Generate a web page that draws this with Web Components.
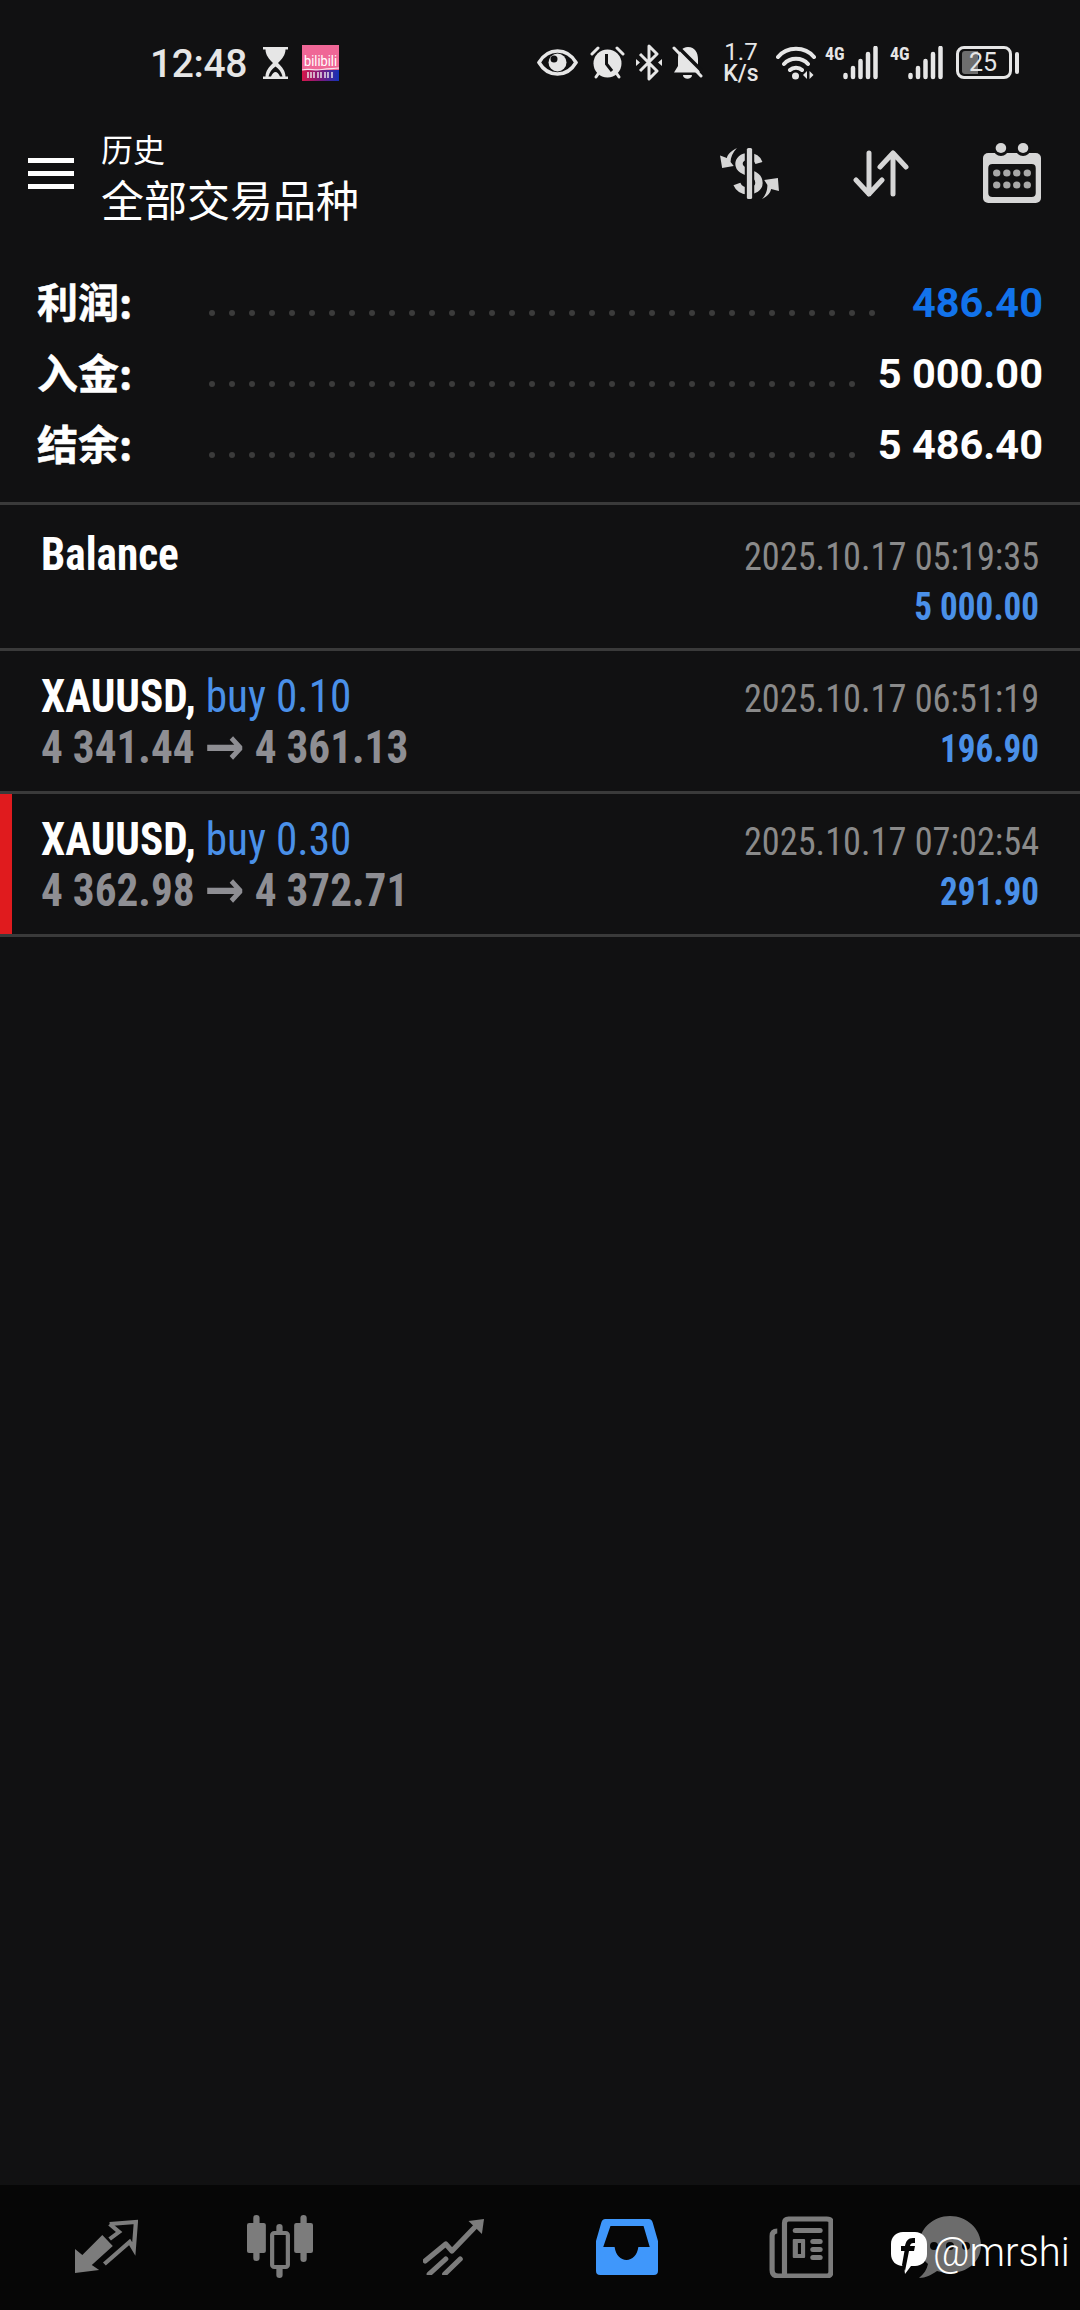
<!DOCTYPE html>
<html lang="zh">
<head>
<meta charset="utf-8">
<title>历史</title>
<style>
  html, body { margin: 0; padding: 0; background: #111112; }
  body { width: 1080px; height: 2310px; overflow: hidden; font-family: Roboto, "Noto Sans CJK SC", sans-serif; }
</style>
</head>
<body>
<history-screen>
  <status-bar></status-bar>
  <app-toolbar subtitle="历史" heading="全部交易品种"></app-toolbar>
  <summary-list>
    <summary-row dots="34">利润:<span slot="value" style="color:#1273eb">486.40</span></summary-row>
    <summary-row dots="33">入金:<span slot="value">5 000.00</span></summary-row>
    <summary-row dots="33">结余:<span slot="value">5 486.40</span></summary-row>
  </summary-list>
  <deal-row class="first" time="2025.10.17 05:19:35" amount="5 000.00" symbol="Balance"></deal-row>
  <deal-row time="2025.10.17 06:51:19" amount="196.90" symbol="XAUUSD," side="buy 0.10" from="4 341.44" to="4 361.13"></deal-row>
  <deal-row marked time="2025.10.17 07:02:54" amount="291.90" symbol="XAUUSD," side="buy 0.30" from="4 362.98" to="4 372.71"></deal-row>
  <bottom-nav></bottom-nav>
</history-screen>

<script>
// history-screen: page column, the nav is pushed to the bottom
class HistoryScreen extends HTMLElement {
  constructor() {
    super();
    this.attachShadow({ mode: 'open' });
    this.shadowRoot.innerHTML = `
      <style>
        :host { display: flex; flex-direction: column; width: 1080px; height: 2310px; background: #111112; color: #fff; }
        ::slotted(bottom-nav) { margin-top: auto; }
      </style>
      <slot></slot>`;
  }
}

const signalIcon = `<svg style="position:absolute;left:18px;top:0" width="35" height="34" viewBox="0 0 35 34"><path stroke="#e6e6e6" stroke-width="4.500" stroke-linecap="round" d="M2.500 31V29M10 31V22M17.500 31V15M25 31V8M32.500 31V2"/></svg>`;

class StatusBar extends HTMLElement {
  constructor() {
    super();
    this.attachShadow({ mode: 'open' });
    this.shadowRoot.innerHTML = `
      <style>
        :host { display: flex; align-items: center; height: 125px; padding: 0 61px 0 150px; box-sizing: border-box; color: #e6e6e6; font-family: Roboto, sans-serif; }
        svg { display: block; flex: none; }
        .time { font-size: 39px; font-weight: 500; line-height: 40px; width: 96px; margin-top: 2px; letter-spacing: -.4px; white-space: nowrap; }
        .glass { margin-left: 17px; }
        .bili { margin-left: 14px; }
        .icons { display: flex; align-items: center; margin-left: auto; }
        .speed { width: 36px; margin: 0 17px 0 20px; text-align: center; white-space: nowrap; }
        .speed .up { font-size: 24px; line-height: 21px; }
        .speed .unit { font-size: 23px; line-height: 21px; font-weight: 500; }
        .net { display: flex; align-items: flex-start; width: 53px; height: 34px; position: relative; }
        .net span { font-size: 18px; font-weight: 700; line-height: 15px; font-stretch: 75%; }
        .batt { display: flex; align-items: center; width: 63px; margin-left: 13px; }
        .cell { position: relative; width: 56px; height: 33px; box-sizing: border-box; border: 3px solid #e6e6e6; border-radius: 8px; font-size: 25px; line-height: 27px; padding-left: 10px; }
        .cell i { position: absolute; left: 3px; top: 2px; bottom: 2px; width: 16px; background: #6e6e6e; border-radius: 3px 0 0 3px; }
        .cell b { position: relative; font-weight: 400; }
        .nub { width: 4px; height: 22px; margin-left: 3px; background: #e6e6e6; border-radius: 2px; }
      </style>
      <div class="time">12:48</div>
      <svg class="glass" width="25" height="32" viewBox="0 0 25 32"><path fill="#e6e6e6" d="M0 0H25V2.500H22.500C22.500 8 19 12 15 16C19 20 22.500 24 22.500 29.500H25V32H0V29.500H2.500C2.500 24 6 20 10 16C6 12 2.500 8 2.500 2.500H0Z"/><path fill="#111112" d="M12.500 19.500C9 22 6.500 25 5.500 29.500H8C9 27 11 25 12.500 25C14 25 16 27 17 29.500H19.500C18.500 25 16 22 12.500 19.500Z"/></svg>
      <svg class="bili" width="37" height="36" viewBox="0 0 37 36"><defs><linearGradient id="bl" x1="0" x2="1" y1="0" y2="0"><stop offset="0" stop-color="#d6174a"/><stop offset=".5" stop-color="#7c1a7c"/><stop offset="1" stop-color="#1232b8"/></linearGradient></defs><rect width="37" height="25" fill="#ef6796"/><rect y="25" width="37" height="11" fill="url(#bl)"/><path fill="none" stroke="#f6e6ee" stroke-width="1.200" d="M0 25C8 23 12 26 20 24.500S30 24 37 23"/><text x="18.500" y="21" font-family="Roboto" font-size="15" font-weight="400" fill="#fff" text-anchor="middle" textLength="33" lengthAdjust="spacingAndGlyphs">bilibili</text><path stroke="#eee" stroke-width="1.400" d="M6 27V33M9 27V33M12 27V33M16 27V33M19 27V33M23 27V33M26 27V33M30 27V33"/></svg>
      <div class="icons">
        <svg width="41" height="27" viewBox="0 0 41 27"><path fill="none" stroke="#e6e6e6" stroke-width="3.500" d="M2 13.500C7 5 13 2 20.500 2S34 5 39 13.500C34 22 28 25 20.500 25S7 22 2 13.500Z"/><circle cx="20.500" cy="13.500" r="9" fill="#e6e6e6"/><circle cx="17" cy="10" r="3.500" fill="#111112"/></svg>
        <svg style="margin-left:12px" width="35" height="33" viewBox="0 0 35 33"><circle cx="17.500" cy="17.500" r="14" fill="#e6e6e6"/><path fill="none" stroke="#e6e6e6" stroke-width="3" stroke-linecap="round" d="M2 8L8 2M33 8L27 2M6 31L8 28M29 31L27 28"/><path fill="none" stroke="#111112" stroke-width="3" d="M16.500 8V18L22 25"/></svg>
        <svg style="margin-left:11px" width="26" height="37" viewBox="0 0 26 37"><path fill="none" stroke="#e6e6e6" stroke-width="3" stroke-linejoin="round" d="M4 10L21 27L13 35V2L21 10L4 27"/><path fill="#e6e6e6" d="M0 15L4 18.500L0 22ZM26 15L22 18.500L26 22Z"/></svg>
        <svg style="margin-left:10px" width="31" height="34" viewBox="0 0 31 34">
          <path fill="#e6e6e6" d="M16 1C23 1 26 7 26 13V21L28 26.500H2L6 20V12C6 6 10 1 16 1Z"/>
          <path fill="#e6e6e6" d="M11 29H20C20 34 11 34 11 29Z"/>
          <path stroke="#111112" stroke-width="3.500" d="M5 0L32 27"/>
          <path stroke="#e6e6e6" stroke-width="3" stroke-linecap="round" d="M2 2L29 30"/>
        </svg>
        <div class="speed"><div class="up">1.7</div><div class="unit">K/s</div></div>
        <svg width="40" height="35" viewBox="0 0 40 35"><path fill="none" stroke="#e6e6e6" stroke-width="4" stroke-linecap="round" d="M2 12C11 1 29 1 38 12M8 19C14 12 26 12 32 19M14 25C17 22 23 22 26 25"/><circle cx="19.500" cy="31" r="3.500" fill="#e6e6e6"/><path fill="#e6e6e6" d="M31 26V34L27 30ZM33.500 26V34L37.500 30Z"/></svg>
        <div class="net" style="margin-left:9px"><span>4G</span>${signalIcon}</div>
        <div class="net" style="margin-left:12px"><span>4G</span>${signalIcon}</div>
        <div class="batt"><div class="cell"><i></i><b>25</b></div><div class="nub"></div></div>
      </div>`;
  }
}

class AppToolbar extends HTMLElement {
  constructor() {
    super();
    this.attachShadow({ mode: 'open' });
    this.shadowRoot.innerHTML = `
      <style>
        :host { display: flex; align-items: center; height: 100px; padding: 0 39px 0 28px; box-sizing: border-box; color: #fff; font-family: "Noto Sans CJK SC", sans-serif; }
        .burger { display: flex; flex-direction: column; gap: 8px; width: 46px; margin: -3px 27px 0 0; }
        .burger i { display: block; height: 5px; background: #fff; }
        .titles { display: flex; flex-direction: column; gap: 5px; }
        .sub { font-size: 32px; line-height: 40px; }
        .main { font-size: 43px; line-height: 50px; white-space: nowrap; }
        .actions { display: flex; align-items: center; margin: -4px 0 0 auto; }
        svg { display: block; }
      </style>
      <div class="burger"><i></i><i></i><i></i></div>
      <div class="titles"><div class="sub" id="sub"></div><div class="main" id="main"></div></div>
      <div class="actions">
        <svg width="61" height="53" viewBox="0 0 58 53" preserveAspectRatio="none" fill="#d6d6d6">
          <path fill="none" stroke="#d6d6d6" stroke-width="7" d="M38 16C36 10 32 9.500 28 9.500C22 9.500 19 13 19 17C19 22 24 24 29 26C34 28 38 30 38 36C38 41 33 44 28 44C23 44 19 42 17 37"/>
          <rect x="24.500" y="0" width="9" height="53" fill="#111112"/>
          <rect x="26.500" y="1" width="5" height="51" rx="1.500"/>
          <path d="M17 1C11 4 8 8 7.500 11L1 8.500L3 21L14 19L11 15C11 10 13 6 17 1Z"/>
          <path d="M41 52C47 49 49 45 49.500 42L57 44L56 31L43 33L46 38C46 43 45 47 41 52Z"/>
        </svg>
        <svg style="margin-left:73px" width="56" height="47" viewBox="0 0 56 47" fill="none" stroke="#d6d6d6" stroke-width="5" stroke-linecap="round" stroke-linejoin="round">
          <path d="M16 3V44M3 30L16 44L29 30"/><path d="M40 44V3M27 17L40 3L53 17"/>
        </svg>
        <svg style="margin-left:74px" width="58" height="60" viewBox="0 0 55 60" preserveAspectRatio="none">
          <rect y="10" width="55" height="50" rx="5" fill="#d6d6d6"/>
          <rect x="5" y="21" width="45" height="33" rx="4" fill="#111112"/>
          <circle cx="17" cy="6" r="7" fill="#111112"/><circle cx="38" cy="6" r="7" fill="#111112"/>
          <circle cx="17" cy="5" r="5" fill="#d6d6d6"/><circle cx="38" cy="5" r="5" fill="#d6d6d6"/>
          <g fill="#a8a8a8"><circle cx="13" cy="30" r="3.500"/><circle cx="22.600" cy="30" r="3.500"/><circle cx="32" cy="30" r="3.500"/><circle cx="42" cy="30" r="3.500"/><circle cx="13" cy="42" r="3.500"/><circle cx="22.600" cy="42" r="3.500"/><circle cx="32" cy="42" r="3.500"/><circle cx="42" cy="42" r="3.500"/></g>
        </svg>
      </div>`;
  }

  connectedCallback() {
    this.shadowRoot.getElementById('sub').textContent = this.getAttribute('subtitle') || '';
    this.shadowRoot.getElementById('main').textContent = this.getAttribute('heading') || '';
  }
}

class SummaryList extends HTMLElement {
  constructor() {
    super();
    this.attachShadow({ mode: 'open' });
    this.shadowRoot.innerHTML = `
      <style>
        :host { display: block; padding: 42px 0 22px; border-bottom: 3px solid #3a3a3a; }
      </style>
      <slot></slot>`;
  }
}

class SummaryRow extends HTMLElement {
  constructor() {
    super();
    this.attachShadow({ mode: 'open' });
    this.shadowRoot.innerHTML = `
      <style>
        :host { display: flex; align-items: center; height: 71px; padding: 0 37px; color: #fff; }
        .label { width: 172px; flex: none; font: 700 41px/67px "Noto Sans CJK SC", sans-serif; padding-bottom: 4px; -webkit-text-stroke: .5px #fff; }
        .dots { display: flex; gap: 14px; margin-top: 20px; }
        .dots i { display: block; width: 6px; height: 6px; border-radius: 50%; background: #3b3b3b; }
        .value { margin-left: auto; font: 700 41.500px/71px Roboto, sans-serif; white-space: nowrap; }
      </style>
      <div class="label"><slot></slot></div>
      <div class="dots" id="dots"></div>
      <div class="value"><slot name="value"></slot></div>`;
  }

  connectedCallback() {
    const n = parseInt(this.getAttribute('dots') || '0', 10);
    this.shadowRoot.getElementById('dots').innerHTML = '<i></i>'.repeat(n);
  }
}

class DealRow extends HTMLElement {
  constructor() {
    super();
    this.attachShadow({ mode: 'open' });
    this.shadowRoot.innerHTML = `
      <style>
        :host { display: flex; height: 143px; box-sizing: border-box; border-bottom: 3px solid #3a3a3a; font-family: Roboto, sans-serif; }
        :host(.first) { height: 146px; padding-top: 4px; }
        .mark { width: 12px; flex: none; }
        :host([marked]) .mark { background: #e01b1e; }
        .body { flex: 1; display: flex; justify-content: space-between; padding: 18.500px 41px 0 29px; }
        /* the app squeezes its row text tighter than Roboto Condensed */
        .left { font-size: 47px; line-height: 51px; white-space: nowrap; font-weight: 700; font-stretch: 75%; transform: scaleX(.92); transform-origin: left top; }
        .sym { color: #fff; }
        .side { color: #4a90e8; font-weight: 400; }
        .prices { color: #8e8e93; }
        .arrow { font: 700 52px/51px "DejaVu Sans", sans-serif; vertical-align: -1px; }
        .right { text-align: right; font-size: 38px; line-height: 50px; white-space: nowrap; padding-top: 4.500px; font-stretch: 75%; }
        .time { color: #8a8a8a; transform: scaleX(.955); transform-origin: right top; }
        .amount { color: #4a90e8; font-weight: 700; transform: scaleX(.925); transform-origin: right top; }
      </style>
      <div class="mark"></div>
      <div class="body">
        <div class="left">
          <div><span class="sym" id="sym"></span> <span class="side" id="side"></span></div>
          <div class="prices" id="prices"></div>
        </div>
        <div class="right">
          <div class="time" id="time"></div>
          <div class="amount" id="amount"></div>
        </div>
      </div>`;
  }

  connectedCallback() {
    const root = this.shadowRoot;
    root.getElementById('sym').textContent = this.getAttribute('symbol') || '';
    root.getElementById('side').textContent = this.getAttribute('side') || '';
    if (this.hasAttribute('from')) {
      root.getElementById('prices').innerHTML =
        `${this.getAttribute('from')} <span class="arrow">→</span> ${this.getAttribute('to')}`;
    }
    root.getElementById('time').textContent = this.getAttribute('time') || '';
    root.getElementById('amount').textContent = this.getAttribute('amount') || '';
  }
}

class BottomNav extends HTMLElement {
  constructor() {
    super();
    this.attachShadow({ mode: 'open' });
    this.shadowRoot.innerHTML = `
      <style>
        :host { display: grid; position: relative; grid-template-columns: repeat(6, 173.500px); height: 125px; padding-left: 20px; background: #060606; align-items: center; justify-items: center; }
        svg { display: block; }
        .mark { position: absolute; left: 891px; top: 47px; display: flex; align-items: center; color: #fff; font: 300 40px/40px Roboto, sans-serif; }
        .mark svg { margin-right: 6px; }
      </style>
      <svg style="margin-top:-2px" width="63" height="55" viewBox="0 0 60 55" preserveAspectRatio="none" fill="#7c7c7c">
        <path d="M0 30L7 36L26 16L36 27L16 46L23 51L0 54Z"/>
        <path fill="none" stroke="#7c7c7c" stroke-width="4" d="M33 5L58 3L56 30L52 23L28 45M33 5L42 13L33 20"/>
      </svg>
      <svg style="margin-top:-2px" width="66" height="63" viewBox="0 0 63 63" preserveAspectRatio="none" fill="#7c7c7c">
        <rect x="6" y="0" width="6" height="46" rx="3"/><rect x="0" y="8" width="18" height="30" rx="2"/>
        <rect x="51" y="0" width="6" height="47" rx="3"/><rect x="45" y="8" width="18" height="30" rx="2"/>
        <rect x="28" y="9" width="6" height="54" rx="3"/><rect x="24" y="18" width="15" height="34" rx="2" fill="#060606" stroke="#7c7c7c" stroke-width="4"/>
      </svg>
      <svg style="margin-top:-2px" width="61" height="56" viewBox="0 0 59 56" preserveAspectRatio="none" fill="none" stroke="#7c7c7c" stroke-width="5" stroke-linecap="round" stroke-linejoin="round">
        <path d="M2 42L22 25L28 32L54 4"/><path d="M6 55L22 40M21 55L36 40"/>
        <path fill="#7c7c7c" stroke="none" d="M44 2L59 0L57 15Z"/>
      </svg>
      <svg style="margin-top:-2px" width="62" height="56" viewBox="0 0 60 56" preserveAspectRatio="none">
        <path fill="#3f97fb" d="M9 0H51Q54 0 55 4L60 22V52Q60 56 56 56H4Q0 56 0 52V22L5 4Q6 0 9 0Z"/>
        <path fill="#060606" d="M14 7H46L52 28H41C40 36 35 41 29.500 41C24 41 19 36 18 28H7Z"/>
      </svg>
      <svg style="margin-top:-2px" width="64" height="62" viewBox="0 0 62 62" preserveAspectRatio="none">
        <path fill="none" stroke="#7c7c7c" stroke-width="5" d="M8 15Q3 15 3 20V54Q3 60 9 60H56Q60 60 60 56V6Q60 3 56 3H19Q15 3 15 7V59"/>
        <rect x="23" y="12" width="29" height="5" rx="2.500" fill="#7c7c7c"/>
        <rect x="23" y="23" width="12" height="19" rx="1" fill="#7c7c7c"/><rect x="28" y="27" width="3" height="11" fill="#060606"/>
        <rect x="40" y="23" width="12" height="5" rx="2.500" fill="#7c7c7c"/><rect x="40" y="31" width="12" height="5" rx="2.500" fill="#7c7c7c"/><rect x="40" y="39" width="12" height="5" rx="2.500" fill="#7c7c7c"/>
      </svg>
      <svg style="margin:-2px 48px 0 0" width="62" height="62" viewBox="0 0 62 62">
        <path fill="#6c6c6c" d="M31 0C48 0 62 13 62 29C62 46 48 57 31 57C26 57 22 56 18 55C12 59 7 62 0 62C5 58 8 53 9 48C3 43 0 36 0 29C0 13 14 0 31 0Z"/>
        <circle cx="15" cy="30" r="4" fill="#060606"/><circle cx="31" cy="30" r="4" fill="#060606"/><circle cx="47" cy="30" r="4" fill="#060606"/>
      </svg>
      <div class="mark">
        <svg width="36" height="42" viewBox="0 0 36 42">
          <path fill="#fff" d="M12 0H24C31 0 36 5 36 12V22C36 29 31 34 24 34H20L14 42L13 34H12C5 34 0 29 0 22V12C0 5 5 0 12 0Z"/>
          <path fill="#060606" d="M22 6C17 6 15 9 14 14H10V19H13.500L11 33L14 39L18 19H23L24 14H19C19.500 11.500 20.500 10.500 24 11V6Z"/>
        </svg>
        <span>@mrshi</span>
      </div>`;
  }
}

customElements.define('history-screen', HistoryScreen);
customElements.define('status-bar', StatusBar);
customElements.define('app-toolbar', AppToolbar);
customElements.define('summary-list', SummaryList);
customElements.define('summary-row', SummaryRow);
customElements.define('deal-row', DealRow);
customElements.define('bottom-nav', BottomNav);
</script>
</body>
</html>
